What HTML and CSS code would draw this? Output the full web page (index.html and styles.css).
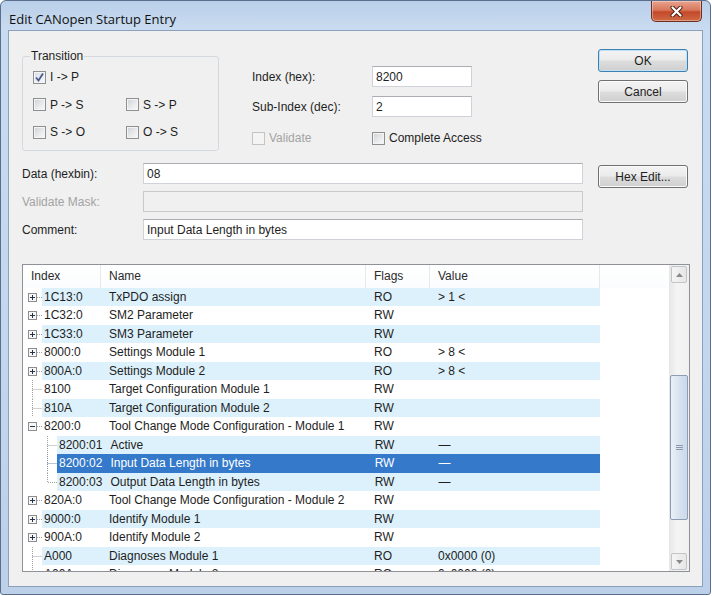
FILE: index.html
```html
<!DOCTYPE html>
<html>
<head>
<meta charset="utf-8">
<title>Edit CANopen Startup Entry</title>
<link rel="stylesheet" href="styles.css">
</head>
<body>
<div class="window">
  <div class="titlebar">
    <span class="title">Edit CANopen Startup Entry</span>
    <div class="close">
      <svg width="13" height="11" viewBox="0 0 13 11"><path d="M2.5 1.5 L10.5 9.5 M10.5 1.5 L2.5 9.5" stroke="#4b1d12" stroke-width="4" stroke-linecap="round"/><path d="M2.5 1.5 L10.5 9.5 M10.5 1.5 L2.5 9.5" stroke="#ffffff" stroke-width="2.2" stroke-linecap="round"/></svg>
    </div>
  </div>
  <div class="client">
    <div class="top">
      <div class="leftcol">
        <div class="upper">
          <fieldset class="group">
            <legend>Transition</legend>
            <div class="cbgrid">
              <label class="cbl"><span class="cb checked"><svg width="11" height="11" viewBox="0 0 11 11"><path d="M2 5.5 L4.5 8.5 L9 1.5" fill="none" stroke="#4b5a8e" stroke-width="1.8"/></svg></span>I -&gt; P</label>
              <span></span>
              <label class="cbl"><span class="cb"></span>P -&gt; S</label>
              <label class="cbl"><span class="cb"></span>S -&gt; P</label>
              <label class="cbl"><span class="cb"></span>S -&gt; O</label>
              <label class="cbl"><span class="cb"></span>O -&gt; S</label>
            </div>
          </fieldset>
          <div class="idxcol">
            <div class="frow"><span class="flabel w120">Index (hex):</span><div class="inp w100">8200</div></div>
            <div class="frow"><span class="flabel w120">Sub-Index (dec):</span><div class="inp w100">2</div></div>
            <div class="cbrow">
              <label class="cbl dis w120"><span class="cb"></span>Validate</label>
              <label class="cbl"><span class="cb"></span>Complete Access</label>
            </div>
          </div>
        </div>
        <div class="form">
          <div class="frow"><span class="flabel w121">Data (hexbin):</span><div class="inp wide">08</div></div>
          <div class="frow"><span class="flabel w121 dis">Validate Mask:</span><div class="inp wide disabled"></div></div>
          <div class="frow"><span class="flabel w121">Comment:</span><div class="inp wide">Input Data Length in bytes</div></div>
        </div>
      </div>
      <div class="buttons">
        <div class="btn def">OK</div>
        <div class="btn">Cancel</div>
        <div class="btn hex">Hex Edit...</div>
      </div>
    </div>

    <div class="list">
      <div class="main">
        <div class="hdr">
          <div class="h h-idx">Index</div>
          <div class="h h-name">Name</div>
          <div class="h h-fl">Flags</div>
          <div class="h h-val">Value</div>
          <div class="h h-fill"></div>
        </div>
        <div class="rows">
          <div class="row s">
            <svg class="tr" width="19" height="18.5" viewBox="0 0 19 18.5"><path d="M14 9.5 H19" class="dot"/><rect x="5.5" y="5.5" width="8" height="8" class="box"/><path d="M7 9.5 H12 M9.5 7 V12" class="pm"/></svg>
            <div class="cells"><span class="c-idx">1C13:0</span><span class="c-name">TxPDO assign</span><span class="c-fl">RO</span><span class="c-val">&gt; 1 &lt;</span></div>
          </div>
          <div class="row">
            <svg class="tr" width="19" height="18.5" viewBox="0 0 19 18.5"><path d="M14 9.5 H19" class="dot"/><rect x="5.5" y="5.5" width="8" height="8" class="box"/><path d="M7 9.5 H12 M9.5 7 V12" class="pm"/></svg>
            <div class="cells"><span class="c-idx">1C32:0</span><span class="c-name">SM2 Parameter</span><span class="c-fl">RW</span><span class="c-val"></span></div>
          </div>
          <div class="row s">
            <svg class="tr" width="19" height="18.5" viewBox="0 0 19 18.5"><path d="M14 9.5 H19" class="dot"/><rect x="5.5" y="5.5" width="8" height="8" class="box"/><path d="M7 9.5 H12 M9.5 7 V12" class="pm"/></svg>
            <div class="cells"><span class="c-idx">1C33:0</span><span class="c-name">SM3 Parameter</span><span class="c-fl">RW</span><span class="c-val"></span></div>
          </div>
          <div class="row">
            <svg class="tr" width="19" height="18.5" viewBox="0 0 19 18.5"><path d="M14 9.5 H19" class="dot"/><rect x="5.5" y="5.5" width="8" height="8" class="box"/><path d="M7 9.5 H12 M9.5 7 V12" class="pm"/></svg>
            <div class="cells"><span class="c-idx">8000:0</span><span class="c-name">Settings Module 1</span><span class="c-fl">RO</span><span class="c-val">&gt; 8 &lt;</span></div>
          </div>
          <div class="row s">
            <svg class="tr" width="19" height="18.5" viewBox="0 0 19 18.5"><path d="M14 9.5 H19" class="dot"/><rect x="5.5" y="5.5" width="8" height="8" class="box"/><path d="M7 9.5 H12 M9.5 7 V12" class="pm"/></svg>
            <div class="cells"><span class="c-idx">800A:0</span><span class="c-name">Settings Module 2</span><span class="c-fl">RO</span><span class="c-val">&gt; 8 &lt;</span></div>
          </div>
          <div class="row">
            <svg class="tr" width="19" height="18.5" viewBox="0 0 19 18.5"><path d="M9.5 0 V18.5 M9.5 9.5 H19" class="dot"/></svg>
            <div class="cells"><span class="c-idx">8100</span><span class="c-name">Target Configuration Module 1</span><span class="c-fl">RW</span><span class="c-val"></span></div>
          </div>
          <div class="row s">
            <svg class="tr" width="19" height="18.5" viewBox="0 0 19 18.5"><path d="M9.5 0 V18.5 M9.5 9.5 H19" class="dot"/></svg>
            <div class="cells"><span class="c-idx">810A</span><span class="c-name">Target Configuration Module 2</span><span class="c-fl">RW</span><span class="c-val"></span></div>
          </div>
          <div class="row">
            <svg class="tr" width="19" height="18.5" viewBox="0 0 19 18.5"><path d="M14 9.5 H19" class="dot"/><rect x="5.5" y="5.5" width="8" height="8" class="box"/><path d="M7 9.5 H12" class="pm"/></svg>
            <div class="cells"><span class="c-idx">8200:0</span><span class="c-name">Tool Change Mode Configuration - Module 1</span><span class="c-fl">RW</span><span class="c-val"></span></div>
          </div>
          <div class="row s child">
            <svg class="tr" width="34" height="18.5" viewBox="0 0 34 18.5"><path d="M24.5 0 V18.5 M24.5 9.5 H34" class="dot"/></svg>
            <div class="cells"><span class="c-idx">8200:01</span><span class="c-name">Active</span><span class="c-fl">RW</span><span class="c-val">—</span></div>
          </div>
          <div class="row sel child">
            <svg class="tr" width="34" height="18.5" viewBox="0 0 34 18.5"><path d="M24.5 0 V18.5 M24.5 9.5 H34" class="dot dark"/></svg>
            <div class="cells"><span class="c-idx">8200:02</span><span class="c-name">Input Data Length in bytes</span><span class="c-fl">RW</span><span class="c-val">—</span></div>
          </div>
          <div class="row s child">
            <svg class="tr" width="34" height="18.5" viewBox="0 0 34 18.5"><path d="M24.5 0 V9.5 H34" class="dot"/></svg>
            <div class="cells"><span class="c-idx">8200:03</span><span class="c-name">Output Data Length in bytes</span><span class="c-fl">RW</span><span class="c-val">—</span></div>
          </div>
          <div class="row">
            <svg class="tr" width="19" height="18.5" viewBox="0 0 19 18.5"><path d="M14 9.5 H19" class="dot"/><rect x="5.5" y="5.5" width="8" height="8" class="box"/><path d="M7 9.5 H12 M9.5 7 V12" class="pm"/></svg>
            <div class="cells"><span class="c-idx">820A:0</span><span class="c-name">Tool Change Mode Configuration - Module 2</span><span class="c-fl">RW</span><span class="c-val"></span></div>
          </div>
          <div class="row s">
            <svg class="tr" width="19" height="18.5" viewBox="0 0 19 18.5"><path d="M14 9.5 H19" class="dot"/><rect x="5.5" y="5.5" width="8" height="8" class="box"/><path d="M7 9.5 H12 M9.5 7 V12" class="pm"/></svg>
            <div class="cells"><span class="c-idx">9000:0</span><span class="c-name">Identify Module 1</span><span class="c-fl">RW</span><span class="c-val"></span></div>
          </div>
          <div class="row">
            <svg class="tr" width="19" height="18.5" viewBox="0 0 19 18.5"><path d="M14 9.5 H19" class="dot"/><rect x="5.5" y="5.5" width="8" height="8" class="box"/><path d="M7 9.5 H12 M9.5 7 V12" class="pm"/></svg>
            <div class="cells"><span class="c-idx">900A:0</span><span class="c-name">Identify Module 2</span><span class="c-fl">RW</span><span class="c-val"></span></div>
          </div>
          <div class="row s">
            <svg class="tr" width="19" height="18.5" viewBox="0 0 19 18.5"><path d="M9.5 0 V18.5 M9.5 9.5 H19" class="dot"/></svg>
            <div class="cells"><span class="c-idx">A000</span><span class="c-name">Diagnoses Module 1</span><span class="c-fl">RO</span><span class="c-val">0x0000 (0)</span></div>
          </div>
          <div class="row">
            <svg class="tr" width="19" height="18.5" viewBox="0 0 19 18.5"><path d="M9.5 0 V18.5 M9.5 9.5 H19" class="dot"/></svg>
            <div class="cells"><span class="c-idx">A00A</span><span class="c-name">Diagnoses Module 2</span><span class="c-fl">RO</span><span class="c-val">0x0000 (0)</span></div>
          </div>
        </div>
      </div>
      <div class="scrollbar">
        <div class="sbtn"><svg width="7" height="4" viewBox="0 0 7 4"><path d="M0 4 L3.5 0 L7 4 Z" fill="#8a8a8a"/></svg></div>
        <div class="track">
          <div class="thumb"><svg width="7" height="7" viewBox="0 0 7 7"><path d="M0 1.5 H7 M0 3.5 H7 M0 5.5 H7" stroke="#8a98ad" stroke-width="1"/></svg></div>
        </div>
        <div class="sbtn"><svg width="7" height="4" viewBox="0 0 7 4"><path d="M0 0 L3.5 4 L7 0 Z" fill="#8a8a8a"/></svg></div>
      </div>
    </div>
  </div>
</div>
</body>
</html>
```

FILE: styles.css
```css
* { box-sizing: border-box; }
html, body { margin: 0; background: #ffffff; }
body {
  font-family: "Liberation Sans", Arial, sans-serif;
  font-size: 12px;
  color: #1e1e1e;
}

.window {
  width: 711px;
  height: 595px;
  border: 1px solid #5b6f8c;
  border-radius: 6px 6px 3px 3px;
  background: linear-gradient(#b9cfe9 0px, #c9dbf0 28px, #c3d6ed 60%, #bcd0ea 100%);
  display: flex;
  flex-direction: column;
}

.titlebar {
  height: 29px;
  flex: none;
  display: flex;
  justify-content: space-between;
  align-items: flex-start;
}
.title {
  font-family: "Open Sans", "Liberation Sans", sans-serif;
  font-size: 13px;
  line-height: 16px;
  color: #111;
  padding: 10px 0 0 8px;
}
.close {
  width: 51px;
  height: 21px;
  margin-right: 8px;
  border: 1px solid #6e2e20;
  border-top: none;
  border-radius: 0 0 5px 5px;
  background: linear-gradient(#e8a48f 0%, #d9775b 45%, #c4492b 55%, #cf6a45 100%);
  box-shadow: inset 0 0 0 1px rgba(255,255,255,0.35);
  display: flex;
  align-items: center;
  justify-content: center;
}

.client {
  flex: 1;
  margin: 0 7px 7px 7px;
  border: 1px solid #8aa0bc;
  background: #f0f0f0;
  display: flex;
  flex-direction: column;
}

.top {
  display: flex;
  padding: 18px 14px 0 13px;
  gap: 15px;
}
.leftcol {
  width: 561px;
  display: flex;
  flex-direction: column;
  gap: 12px;
}
.upper {
  display: flex;
  gap: 33px;
}

.group {
  margin: 0;
  width: 197px;
  border: 1px solid #d3d9de;
  border-radius: 3px;
  padding: 5px 0 9px 7px;
}
.group legend {
  padding: 0 1px;
  line-height: 14px;
  color: #1e1e1e;
}
.cbgrid {
  margin-left: 3px;
  display: grid;
  grid-template-columns: 93px 80px;
  grid-auto-rows: 18px;
  row-gap: 9.5px;
}

.cbl {
  display: flex;
  align-items: center;
  gap: 4px;
  height: 18px;
  white-space: nowrap;
}
.cb {
  width: 13px;
  height: 13px;
  flex: none;
  border: 1px solid #8e8f8f;
  background: linear-gradient(135deg, #cdd0d5 0%, #e9eaec 55%, #f8f8f8 100%);
  box-shadow: inset 0 0 0 1px #f4f4f4;
  display: flex;
  align-items: center;
  justify-content: center;
}
.cb.checked {
  background: linear-gradient(135deg, #d9dcea 0%, #eceef5 60%, #f9f9fb 100%);
}
.cbl.dis { color: #a3a3a3; }
.cbl.dis .cb {
  border-color: #c4c4c4;
  background: #f4f4f4;
  box-shadow: none;
}

.idxcol {
  padding-top: 17px;
  display: flex;
  flex-direction: column;
  gap: 9px;
}
.cbrow {
  display: flex;
  margin-top: 3px;
}

.frow {
  display: flex;
  align-items: center;
  height: 21px;
}
.flabel { white-space: nowrap; }
.flabel.dis { color: #a3a3a3; }
.w120 { width: 120px; flex: none; }
.w121 { width: 121px; flex: none; }
.w100 { width: 100px; }
.wide { width: 440px; }

.inp {
  height: 21px;
  border: 1px solid #cfd2d8;
  border-top-color: #abadb3;
  background: #ffffff;
  padding-left: 3px;
  display: flex;
  align-items: center;
  white-space: nowrap;
}
.inp.disabled {
  background: #f0f0f0;
  border-color: #c7c9cc;
}

.form {
  display: flex;
  flex-direction: column;
  gap: 7px;
}

.buttons {
  width: 90px;
  display: flex;
  flex-direction: column;
  gap: 8px;
}
.btn {
  height: 23px;
  border: 1px solid #707070;
  border-radius: 3px;
  background: linear-gradient(#f3f3f3 0%, #ebebeb 48%, #dddddd 52%, #cfcfcf 100%);
  box-shadow: inset 0 0 0 1px #fbfbfb;
  display: flex;
  align-items: center;
  justify-content: center;
  color: #1e1e1e;
}
.btn.def {
  border-color: #3c7fb1;
  box-shadow: inset 0 0 0 1px #bfe0f5;
}
.btn.hex { margin-top: 54px; }

.list {
  margin: 24px 12px 0 13px;
  height: 308px;
  border: 1px solid #8e9196;
  background: #ffffff;
  display: flex;
}
.main {
  width: 646px;
  display: flex;
  flex-direction: column;
}
.hdr {
  height: 22.5px;
  flex: none;
  display: flex;
  background: linear-gradient(#ffffff, #fbfcfd);
}
.h {
  padding-left: 8px;
  display: flex;
  align-items: center;
  border-right: 1px solid #e6e8ea;
  color: #2a2a2a;
}
.h-idx { width: 78px; }
.h-name { width: 265px; }
.h-fl { width: 64px; }
.h-val { width: 170px; }
.h-fill { flex: 1; border-right: none; }

.rows {
  height: 283.5px;
  overflow: hidden;
}
.row {
  height: 18.5px;
  display: flex;
}
.tr { flex: none; display: block; }
.dot {
  fill: none;
  stroke: #a0a0a0;
  stroke-width: 1;
  stroke-dasharray: 1 1;
}
.dot.dark { stroke: #7c8ca8; }
.box { fill: #f6f6f6; stroke: #8d8d8d; }
.pm { stroke: #24344f; stroke-width: 1; }

.cells {
  width: 558px;
  flex: none;
  display: flex;
  align-items: center;
  white-space: nowrap;
}
.row.child .cells { width: 543px; }
.row.s .cells { background: #dcf1fb; }
.row.sel .cells { background: #3579cb; color: #ffffff; }
.c-idx { flex: 1; padding-left: 2px; }
.c-name { width: 265px; padding-left: 8px; }
.c-fl { width: 64px; padding-left: 8px; }
.c-val { width: 170px; padding-left: 8px; }

.scrollbar {
  width: 20px;
  display: flex;
  flex-direction: column;
  background: linear-gradient(90deg, #e6e6e6, #f4f4f4 40%, #f0f0f0);
  padding: 0 1px 0 1px;
}
.sbtn {
  height: 17px;
  flex: none;
  margin: 1px 1px;
  border: 1px solid #c2c4c7;
  border-radius: 2px;
  background: linear-gradient(90deg, #f5f5f5, #e6e6e6);
  display: flex;
  align-items: center;
  justify-content: center;
}
.track {
  flex: 1;
}
.thumb {
  margin-top: 91px;
  height: 145px;
  border: 1px solid #8d9db3;
  border-radius: 2px;
  background: linear-gradient(90deg, #eaf0f8, #d5e0ee 60%, #ccd9ea);
  display: flex;
  align-items: center;
  justify-content: center;
}
```
